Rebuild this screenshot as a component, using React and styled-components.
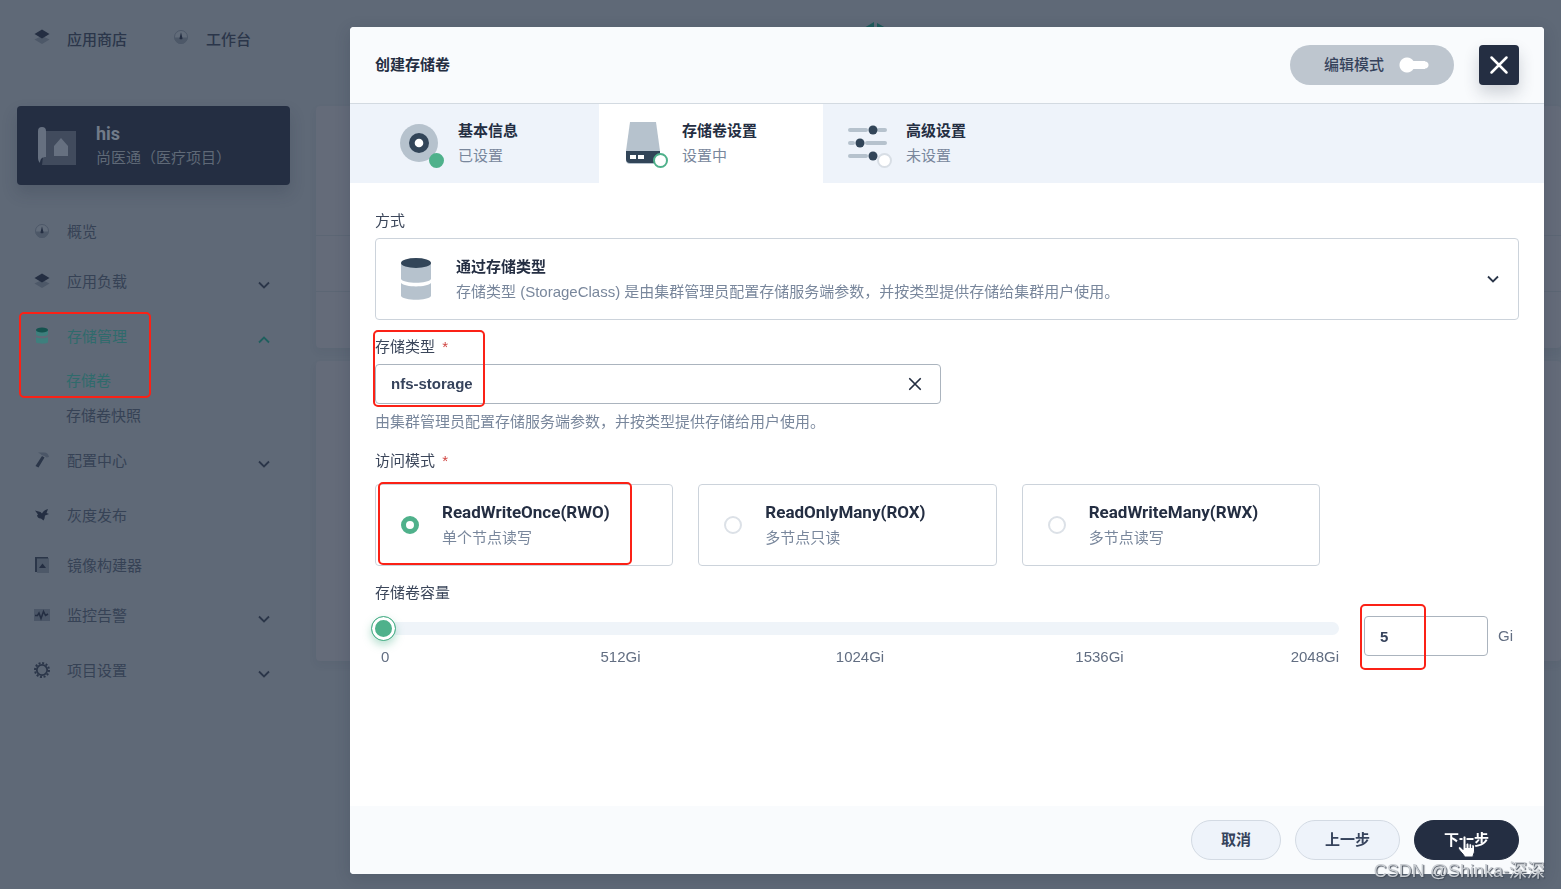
import React from 'react';
import styled, { createGlobalStyle, css } from 'styled-components';


const GlobalStyle = createGlobalStyle`
  * {
    box-sizing: border-box;
  }

  body {
    margin: 0;
    background: #5f6977;
    color: #242e42;
    font-family: "Liberation Sans", "Noto Sans CJK SC", sans-serif;
    font-size: 15px;
    line-height: 24px;
  }

  button, input {
    margin: 0;
    font: inherit;
    color: inherit;
  }

  button {
    cursor: pointer;
  }

  h1, h2, p, ul {
    margin: 0;
    padding: 0;
  }

  svg {
    display: block;
    flex: none;
  }
`

/* page behind the dialog */

const Page = styled.div`
  min-height: 100vh;
  padding: 0 0 0 17px;
  overflow: hidden;
`

const TopBar = styled.header`
  height: 80px;
  padding: 0 0 0 17px;
  display: grid;
  grid-template-columns: 54% auto;
  align-items: center;
`

const TopNav = styled.nav`
  display: flex;
  gap: 46px;
`

const TopLink = styled.a`
  display: flex;
  align-items: center;
  gap: 17px;
  color: #2b364a;
  font-weight: 500;
  text-decoration: none;

  svg {
    margin-bottom: 7px;
  }
`

const Logo = styled.div`
  padding-left: 4px;
`

const Columns = styled.div`
  display: flex;
  gap: 26px;
  padding-top: 26px;
`

const Sidebar = styled.aside`
  width: 273px;
  flex: none;
`

const Project = styled.div`
  height: 79px;
  padding: 0 20px;
  display: flex;
  align-items: center;
  gap: 19px;
  border-radius: 4px;
  background: #242e42;
  box-shadow: 0 8px 16px 0 rgba(36, 46, 66, 0.2);
  color: #5f6977;

  strong {
    display: block;
    font-family: Roboto, sans-serif;
    font-size: 18px;
    color: #727b89;
  }
`

const Menu = styled.ul`
  margin-top: 22px;
  list-style: none;
`

const MenuItem = styled.li`
  position: relative;
  margin-bottom: ${props => props.$spaced ? '5px' : '0'};
`

const MenuLink = styled.a`
  height: 50px;
  padding: 0 18px 0 17px;
  display: flex;
  align-items: center;
  gap: 17px;
  color: ${props => props.$active ? '#2f6b6c' : '#364255'};
  text-decoration: none;

  span {
    flex: 1;
  }

  svg:first-child {
    margin-bottom: 2px;
  }

  span + svg {
    margin-top: 5px;
  }
`

const SubMenu = styled.ul`
  padding: 1px 0 3px 49px;
  list-style: none;
`

const SubLink = styled.a`
  height: 35px;
  display: flex;
  align-items: center;
  color: ${props => props.$active ? '#2f6b6c' : '#364255'};
  text-decoration: none;
`

const Content = styled.main`
  flex: 1;
`

const Panel = styled.div`
  height: ${props => props.$height};
  margin-bottom: 13px;
  padding-top: 129px;
  border-radius: 4px;
  background: #646b79;
  box-shadow: 0 4px 8px 0 rgba(36, 46, 66, 0.06);
`

const PanelLine = styled.div`
  height: 56px;
  border-top: 1px solid #5c6674;
`

/* dialog */

const Dialog = styled.section`
  position: fixed;
  top: 27px;
  right: 17px;
  bottom: 15px;
  left: 350px;
  display: flex;
  flex-direction: column;
  border-radius: 4px;
  background: #fff;
  box-shadow: 0 4px 16px 0 rgba(36, 46, 66, 0.2);
`

const DialogHeader = styled.header`
  height: 77px;
  padding: 0 25px;
  display: flex;
  align-items: center;
  gap: 25px;
  border-bottom: 1px solid #d3dae1;
  border-radius: 4px 4px 0 0;
  background: #f9fbfd;

  h1 {
    flex: 1;
    font-size: 15px;
    font-weight: 500;
    line-height: 24px;
  }
`

const ModeSwitch = styled.label`
  height: 40px;
  padding: 0 25px 0 34px;
  display: flex;
  align-items: center;
  gap: 15px;
  border-radius: 20px;
  background: #bec6cf;
  color: #36435c;
  font-weight: 500;
  cursor: pointer;

  input {
    appearance: none;
    width: 30px;
    height: 16px;
    background:
      radial-gradient(circle at 8px 8px, #fff 7px, transparent 8px),
      radial-gradient(circle at 26px 8px, #fff 3px, transparent 4px),
      linear-gradient(#fff, #fff) 8px center / 18px 8px no-repeat;
  }
`

const CloseButton = styled.button`
  width: 40px;
  height: 40px;
  padding: 0;
  display: grid;
  place-items: center;
  border: 0;
  border-radius: 4px;
  background: #242e42;
  box-shadow: 0 8px 16px 0 rgba(36, 46, 66, 0.2);
  color: #fff;
`

const Steps = styled.nav`
  display: flex;
  padding-left: 25px;
  background: #eef3fa;
`

const Step = styled.button`
  width: 224px;
  height: 79px;
  padding: 0 24px 2px;
  display: flex;
  align-items: center;
  gap: 19px;
  border: 0;
  background: ${props => props.$current ? '#fff' : 'transparent'};
  text-align: left;
`

const StepIcon = styled.span`
  position: relative;
  height: 40px;
  display: flex;
  align-items: center;
`

const StepDot = styled.i`
  position: absolute;
  right: -5px;
  bottom: -5px;
  width: 15px;
  height: 15px;
  border: 2px solid ${props => props.$state === 'todo' ? '#d8dee5' : '#4fb18b'};
  border-radius: 50%;
  background: ${props => props.$state === 'done' ? '#4fb18b' : '#fff'};
`

const titleText = css`
  display: block;
  font-size: ${props => props.$large ? '17px' : '15px'};
  font-family: ${props => props.$large ? 'Roboto, sans-serif' : 'inherit'};
  font-weight: 700;
  line-height: 25px;
  color: #242e42;
`

const Title = styled.span`
  ${titleText}
`

const Desc = styled.span`
  display: block;
  line-height: 25px;
  color: #79879c;
`

const Body = styled.form`
  flex: 1;
  min-height: 0;
  padding: 26px 25px 0;
  overflow: auto;
`

const Field = styled.div`
  position: relative;
  margin-bottom: 15px;
`

const Label = styled.label`
  display: block;
  margin-bottom: ${props => props.$wide ? '11px' : '5px'};
  color: #3b465a;

  em {
    margin-left: 3px;
    color: #d0433f;
    font-style: normal;
  }
`

const MethodSelect = styled.button`
  width: 100%;
  height: 82px;
  padding: 0 17px 0 20px;
  display: flex;
  align-items: center;
  gap: 20px;
  border: 1px solid #ccd3db;
  border-radius: 4px;
  background: #fff;
  text-align: left;
`

const Grow = styled.span`
  flex: 1;
`

const ClearableInput = styled.div`
  max-width: 566px;
  height: 40px;
  padding: 0 18px 0 15px;
  display: flex;
  align-items: center;
  border: 1px solid #abb4be;
  border-radius: 4px;

  input {
    flex: 1;
    min-width: 0;
    padding: 0;
    border: 0;
    outline: 0;
    font-weight: 700;
    color: #36435c;
  }

  button {
    padding: 0;
    border: 0;
    background: none;
  }
`

const Hint = styled.p`
  margin-top: 6px;
  color: #79879c;
`

const ModeList = styled.div`
  max-width: 945px;
  display: grid;
  grid-template-columns: repeat(3, 1fr);
  gap: 25px;
`

const ModeCard = styled.label`
  height: 82px;
  padding: 0 25px;
  display: flex;
  align-items: center;
  gap: 23px;
  border: 1px solid #ccd3db;
  border-radius: 4px;
  cursor: pointer;

  input {
    appearance: none;
    width: 18px;
    height: 18px;
    flex: none;
    border: 2px solid #dce1e7;
    border-radius: 50%;
    background: #fff;
  }

  input:checked {
    border: 5px solid #4fb18b;
  }
`

const Capacity = styled.div`
  display: flex;
  align-items: flex-start;
`

const SliderBox = styled.div`
  flex: 1;
  margin: 6px 25px 0 0;
`

const Track = styled.div`
  height: 13px;
  display: flex;
  align-items: center;
  border-radius: 7px;
  background: #eff4f9;

  input {
    appearance: none;
    flex: 1;
    height: 25px;
    margin: 0 -6px;
    background: none;
  }

  input::-webkit-slider-thumb {
    appearance: none;
    width: 25px;
    height: 25px;
    border: 1px solid #4fb18b;
    border-radius: 50%;
    background: #4fb18b;
    box-shadow: inset 0 0 0 3px #fff, 0 4px 8px 0 rgba(79, 177, 139, 0.4);
  }
`

const Ticks = styled.div`
  padding: 12px 0 0 6px;
  display: flex;
  line-height: 20px;
  color: #626e82;

  span {
    flex: 2;
    text-align: center;
  }

  span:first-child {
    flex: 1;
    text-align: left;
  }

  span:last-child {
    flex: 1;
    text-align: right;
  }
`

const SizeInput = styled.input`
  width: 124px;
  height: 40px;
  padding: 0 15px;
  border: 1px solid #abb4be;
  border-radius: 4px;
  outline: 0;
  font-weight: 700;
  color: #36435c;
`

const Unit = styled.span`
  width: 21px;
  margin-left: 10px;
  line-height: 40px;
  color: #626e82;
`

const DialogFooter = styled.footer`
  height: 68px;
  padding: 0 25px;
  display: flex;
  align-items: center;
  justify-content: flex-end;
  gap: 14px;
  border-radius: 0 0 4px 4px;
  background: #f9fbfd;
`

const FooterButton = styled.button`
  position: relative;
  height: 40px;
  padding: 0 29px;
  border: 1px solid ${props => props.$dark ? '#242e42' : '#d3dae3'};
  border-radius: 20px;
  background: ${props => props.$dark ? '#242e42' : '#eef3fa'};
  color: ${props => props.$dark ? '#fff' : '#36435c'};
  font-weight: 700;
`

/* marks that lie over the page */

const Callout = styled.i`
  position: absolute;
  top: ${props => props.$top};
  left: ${props => props.$left};
  width: ${props => props.$width};
  height: ${props => props.$height};
  border: 2px solid #fb2116;
  border-radius: 5px;
  pointer-events: none;
`

const CapacityInput = styled.div`
  position: relative;
`

const Pointer = styled.svg`
  position: absolute;
  top: 14px;
  left: 42px;
`

const Watermark = styled.div`
  position: fixed;
  right: 16px;
  bottom: 6px;
  font-size: 18px;
  line-height: 24px;
  color: #c9cdd2;
  text-shadow: 1px 1px 1px #444c58;
`


const Layers = () => (
  <svg width="16" height="16" viewBox="0 0 16 16">
    <path d="M.5 10.5 8 7l7.5 3.500L8 15z" fill="#4d5868" />
    <path d="M.5 5 8 .5 15.500 5 8 9.500z" fill="#242e42" />
  </svg>
)

const Dashboard = () => (
  <svg width="16" height="16" viewBox="0 0 16 16">
    <circle cx="8" cy="8" r="6.500" fill="#626c7a" stroke="#4d5868" />
    <path d="M1.500 8.500h13a6.500 6.500 0 0 1-13 0z" fill="#4d5868" />
    <path d="M8 3.200 9.300 8.400a1.400 1.400 0 1 1-2.600 0z" fill="#242e42" />
  </svg>
)

const Storage = () => (
  <svg width="16" height="18" viewBox="0 0 16 18">
    <path d="M2 3v4.500c0 2 12 2 12 0V3z" fill="#3e7f7d" />
    <path d="M2 10v5c0 2.200 12 2.200 12 0v-5c-1 1.800-11 1.800-12 0z" fill="#3e7f7d" />
    <ellipse cx="8" cy="3" rx="6" ry="2.500" fill="#15534f" />
  </svg>
)

const Hammer = () => (
  <svg width="16" height="18" viewBox="0 0 16 18">
    <path d="M8 5 10.500 6.500 4.500 16.500l-3-1.500z" fill="#2b3649" />
    <path d="M4 1.500h6c3 0 4.500 2 5 4.500l-2.500.5-2-1.500-3-1C7 3 6 2.500 4 1.500z" fill="#4b5667" />
  </svg>
)

const Bird = () => (
  <svg width="16" height="16" viewBox="0 0 16 16">
    <path d="M1 3.500 6.500 5 8 6.500C9 4 11 3 14 2l-1.500 4L15 7l-4 1.500-.5 3L9.500 13.500l-2.500-2c-2 .2-3.500-1-4-3L4 7.500z" fill="#242e42" />
  </svg>
)

const ImageBuilder = () => (
  <svg width="16" height="18" viewBox="0 0 16 18">
    <path d="M3 2h12v15H3z" fill="#4d5868" />
    <path d="M1 1h13v1.500H3V16H1z" fill="#2b3649" />
    <path d="m5 12 3.500-4.500L12 12z" fill="#242e42" />
  </svg>
)

const Monitor = () => (
  <svg width="16" height="16" viewBox="0 0 16 16">
    <path d="M0 2h16v12H0z" fill="#4b5667" />
    <path d="M1 8.500h2.500L5 6l2 5.500L9.500 4.500l2 4L14 7" fill="none" stroke="#242e42" strokeWidth="1.500" />
  </svg>
)

const Gear = () => (
  <svg width="16" height="16" viewBox="0 0 16 16">
    <circle cx="8" cy="8" r="7" fill="none" stroke="#2b3649" strokeWidth="2" strokeDasharray="2 1.660" />
    <circle cx="8" cy="8" r="5.200" fill="#5b6573" stroke="#2b3649" strokeWidth="1.800" />
  </svg>
)

const Chevron = ({ up, color = '#2b3649' }) => (
  <svg width="16" height="16" viewBox="0 0 16 16" fill="none" stroke={ color } strokeWidth="1.800">
    <path d={ up ? 'M3 10.500 8 5.500l5 5' : 'M3 5.500l5 5 5-5' } />
  </svg>
)

const Cross = ({ size, width }) => (
  <svg width={ size } height={ size } viewBox="0 0 20 20" fill="none" stroke="currentColor" strokeWidth={ width } strokeLinecap="round">
    <path d="m2.500 2.500 15 15m0-15-15 15" />
  </svg>
)

const InfoIcon = () => (
  <svg width="40" height="40" viewBox="0 0 40 40">
    <circle cx="20" cy="20" r="19" fill="#b6c2cd" />
    <circle cx="20" cy="20" r="10" fill="#324558" />
    <circle cx="20" cy="20" r="4.300" fill="#fff" />
  </svg>
)

const DiskIcon = () => (
  <svg width="40" height="42" viewBox="0 0 40 42">
    <path d="M7 0h26l4 29H3z" fill="#b6c2cd" />
    <path d="M3 31h34v7a4 4 0 0 1-4 4H7a4 4 0 0 1-4-4z" fill="#b6c2cd" />
    <path d="M3 29h34v8a4 4 0 0 1-4 4H7a4 4 0 0 1-4-4z" fill="#324558" />
    <path d="M7 33h6v4H7zm8 0h6v4h-6z" fill="#fff" />
  </svg>
)

const SlidersIcon = () => (
  <svg width="40" height="40" viewBox="0 0 40 40">
    <path d="M3 7h16M32 7h6M3 20h3M20 20h18M3 33h16" fill="none" stroke="#b6c2cd" strokeWidth="4" strokeLinecap="round" />
    <circle cx="26" cy="7" r="4.500" fill="#324558" />
    <circle cx="13" cy="20" r="4.500" fill="#324558" />
    <circle cx="26" cy="33" r="4.500" fill="#324558" />
  </svg>
)

const DatabaseIcon = () => (
  <svg width="40" height="44" viewBox="0 0 40 44">
    <path d="M5 6v16c3 5 27 5 30 0V6z" fill="#b6c2cd" />
    <path d="M5 26v13c3 5 27 5 30 0V26c-4 4.500-26 4.500-30 0z" fill="#b6c2cd" />
    <ellipse cx="20" cy="6" rx="15" ry="5" fill="#324558" />
  </svg>
)

const menu = [
  { name: '概览', icon: Dashboard },
  { name: '应用负载', icon: Layers, spaced: true, more: true },
  { name: '存储管理', icon: Storage, more: true, active: true, children: ['存储卷', '存储卷快照'] },
  { name: '配置中心', icon: Hammer, spaced: true, more: true },
  { name: '灰度发布', icon: Bird },
  { name: '镜像构建器', icon: ImageBuilder },
  { name: '监控告警', icon: Monitor, spaced: true, more: true },
  { name: '项目设置', icon: Gear, more: true },
]

const steps = [
  { name: '基本信息', status: '已设置', state: 'done', icon: InfoIcon },
  { name: '存储卷设置', status: '设置中', state: 'current', icon: DiskIcon },
  { name: '高级设置', status: '未设置', state: 'todo', icon: SlidersIcon },
]

const modes = [
  { name: 'ReadWriteOnce(RWO)', desc: '单个节点读写' },
  { name: 'ReadOnlyMany(ROX)', desc: '多节点只读' },
  { name: 'ReadWriteMany(RWX)', desc: '多节点读写' },
]

const ticks = ['0', '512Gi', '1024Gi', '1536Gi', '2048Gi']


class App extends React.Component {

  state = {
    size: 5,
    mode: modes[0].name,
    storageClass: 'nfs-storage'
  }

  setSize = (e) => this.setState({ size: e.target.value })

  renderMenuItem = (item) => {
    const Icon = item.icon;

    return (
      <MenuItem key={ item.name } $spaced={ item.spaced }>
        <MenuLink href="#" $active={ item.active }>
          <Icon />
          <span>{ item.name }</span>
          { item.more && <Chevron up={ item.active } color={ item.active ? '#1f5f5e' : undefined } /> }
        </MenuLink>
        { item.children &&
          <SubMenu>
            { item.children.map((child, i) => (
              <li key={ child }><SubLink href="#" $active={ i === 0 }>{ child }</SubLink></li>
            )) }
          </SubMenu>
        }
        { item.children && <Callout $top="0" $left="2px" $width="132px" $height="86px" /> }
      </MenuItem>
    )
  }

  render () {
    return (
      <>
        <GlobalStyle />
        <Page>
          <TopBar>
            <TopNav>
              <TopLink href="#"><Layers />应用商店</TopLink>
              <TopLink href="#"><Dashboard />工作台</TopLink>
            </TopNav>
            <Logo>
              <svg width="24" height="36" viewBox="0 0 24 36">
                <path d="M1 6 11 0v12l-5 4v12l-5-4z" fill="#1d5a5a" />
                <path d="m14 1 9 5v18l-9 6z" fill="#1d5a5a" />
              </svg>
            </Logo>
          </TopBar>
          <Columns>
            <Sidebar>
              <Project>
                <svg width="40" height="40" viewBox="0 0 40 40">
                  <path d="M9 5h30v34H5z" fill="#414b5d" />
                  <path d="M1 5a4 4 0 0 1 8 0v26c-4 0-6 2-6 6-1-1-2-3-2-5z" fill="#667080" />
                  <path d="M17 20l7-8 7 8v10H17z" fill="#667080" />
                </svg>
                <div>
                  <strong>his</strong>
                  尚医通（医疗项目）
                </div>
              </Project>
              <Menu>{ menu.map(this.renderMenuItem) }</Menu>
            </Sidebar>
            <Content>
              <Panel $height="242px">
                <PanelLine />
                <PanelLine />
              </Panel>
              <Panel $height="300px" />
            </Content>
          </Columns>
        </Page>

        <Dialog role="dialog" aria-labelledby="dialog-title">
          <DialogHeader>
            <h1 id="dialog-title"><b>创建存储卷</b></h1>
            <ModeSwitch>
              编辑模式
              <input type="checkbox" role="switch" />
            </ModeSwitch>
            <CloseButton aria-label="关闭"><Cross size={ 20 } width={ 2.5 } /></CloseButton>
          </DialogHeader>

          <Steps>
            { steps.map(step => (
              <Step key={ step.name } $current={ step.state === 'current' }>
                <StepIcon>
                  <step.icon />
                  <StepDot $state={ step.state } />
                </StepIcon>
                <span>
                  <Title>{ step.name }</Title>
                  <Desc>{ step.status }</Desc>
                </span>
              </Step>
            )) }
          </Steps>

          <Body>
            <Field>
              <Label htmlFor="method">方式</Label>
              <MethodSelect type="button" id="method">
                <DatabaseIcon />
                <Grow>
                  <Title>通过存储类型</Title>
                  <Desc>存储类型 (StorageClass) 是由集群管理员配置存储服务端参数，并按类型提供存储给集群用户使用。</Desc>
                </Grow>
                <Chevron />
              </MethodSelect>
            </Field>

            <Field>
              <Label htmlFor="storage-class">存储类型 <em>*</em></Label>
              <ClearableInput>
                <input
                  id="storage-class"
                  value={ this.state.storageClass }
                  onChange={ e => this.setState({ storageClass: e.target.value }) }
                />
                <button type="button" aria-label="清除" onClick={ () => this.setState({ storageClass: '' }) }>
                  <Cross size={ 14 } width={ 2.5 } />
                </button>
              </ClearableInput>
              <Hint>由集群管理员配置存储服务端参数，并按类型提供存储给用户使用。</Hint>
              <Callout $top="-5px" $left="-2px" $width="112px" $height="77px" />
            </Field>

            <Field>
              <Label as="div" id="mode-label" $wide>访问模式 <em>*</em></Label>
              <ModeList role="radiogroup" aria-labelledby="mode-label">
                { modes.map(mode => (
                  <ModeCard key={ mode.name }>
                    <input
                      type="radio"
                      name="mode"
                      checked={ this.state.mode === mode.name }
                      onChange={ () => this.setState({ mode: mode.name }) }
                    />
                    <span>
                      <Title $large>{ mode.name }</Title>
                      <Desc>{ mode.desc }</Desc>
                    </span>
                  </ModeCard>
                )) }
              </ModeList>
              <Callout $top="33px" $left="3px" $width="254px" $height="83px" />
            </Field>

            <Field>
              <Label htmlFor="size" $wide>存储卷容量</Label>
              <Capacity>
                <SliderBox>
                  <Track>
                    <input
                      type="range"
                      min="0"
                      max="2048"
                      aria-label="存储卷容量"
                      value={ this.state.size }
                      onChange={ this.setSize }
                    />
                  </Track>
                  <Ticks>
                    { ticks.map(tick => <span key={ tick }>{ tick }</span>) }
                  </Ticks>
                </SliderBox>
                <CapacityInput>
                  <SizeInput id="size" value={ this.state.size } onChange={ this.setSize } />
                  <Callout $top="-12px" $left="-4px" $width="66px" $height="66px" />
                </CapacityInput>
                <Unit>Gi</Unit>
              </Capacity>
            </Field>
          </Body>

          <DialogFooter>
            <FooterButton>取消</FooterButton>
            <FooterButton>上一步</FooterButton>
            <FooterButton $dark>
              下一步
              <Pointer width="20" height="24" viewBox="0 0 20 24">
                <path
                  d="M6 2.500c0-2 3-2 3 0V9c.5-1.500 3-1.300 3 .5.5-1.300 2.700-1 2.700.7.600-1 2.800-.7 2.800 1V16c0 2-1.500 3.500-1.500 6H7.500c0-2-5-6-6-8.500-.7-1.700 1.500-2.500 2.500-1l2 2z"
                  fill="#fff"
                  stroke="#242e42"
                />
                <path d="M9 9v4m3-3.500V13m2.700-2.800V13" stroke="#242e42" />
              </Pointer>
            </FooterButton>
          </DialogFooter>
        </Dialog>
        <Watermark>CSDN @Shinka-深深</Watermark>
      </>
    )
  }
}

export default App;
